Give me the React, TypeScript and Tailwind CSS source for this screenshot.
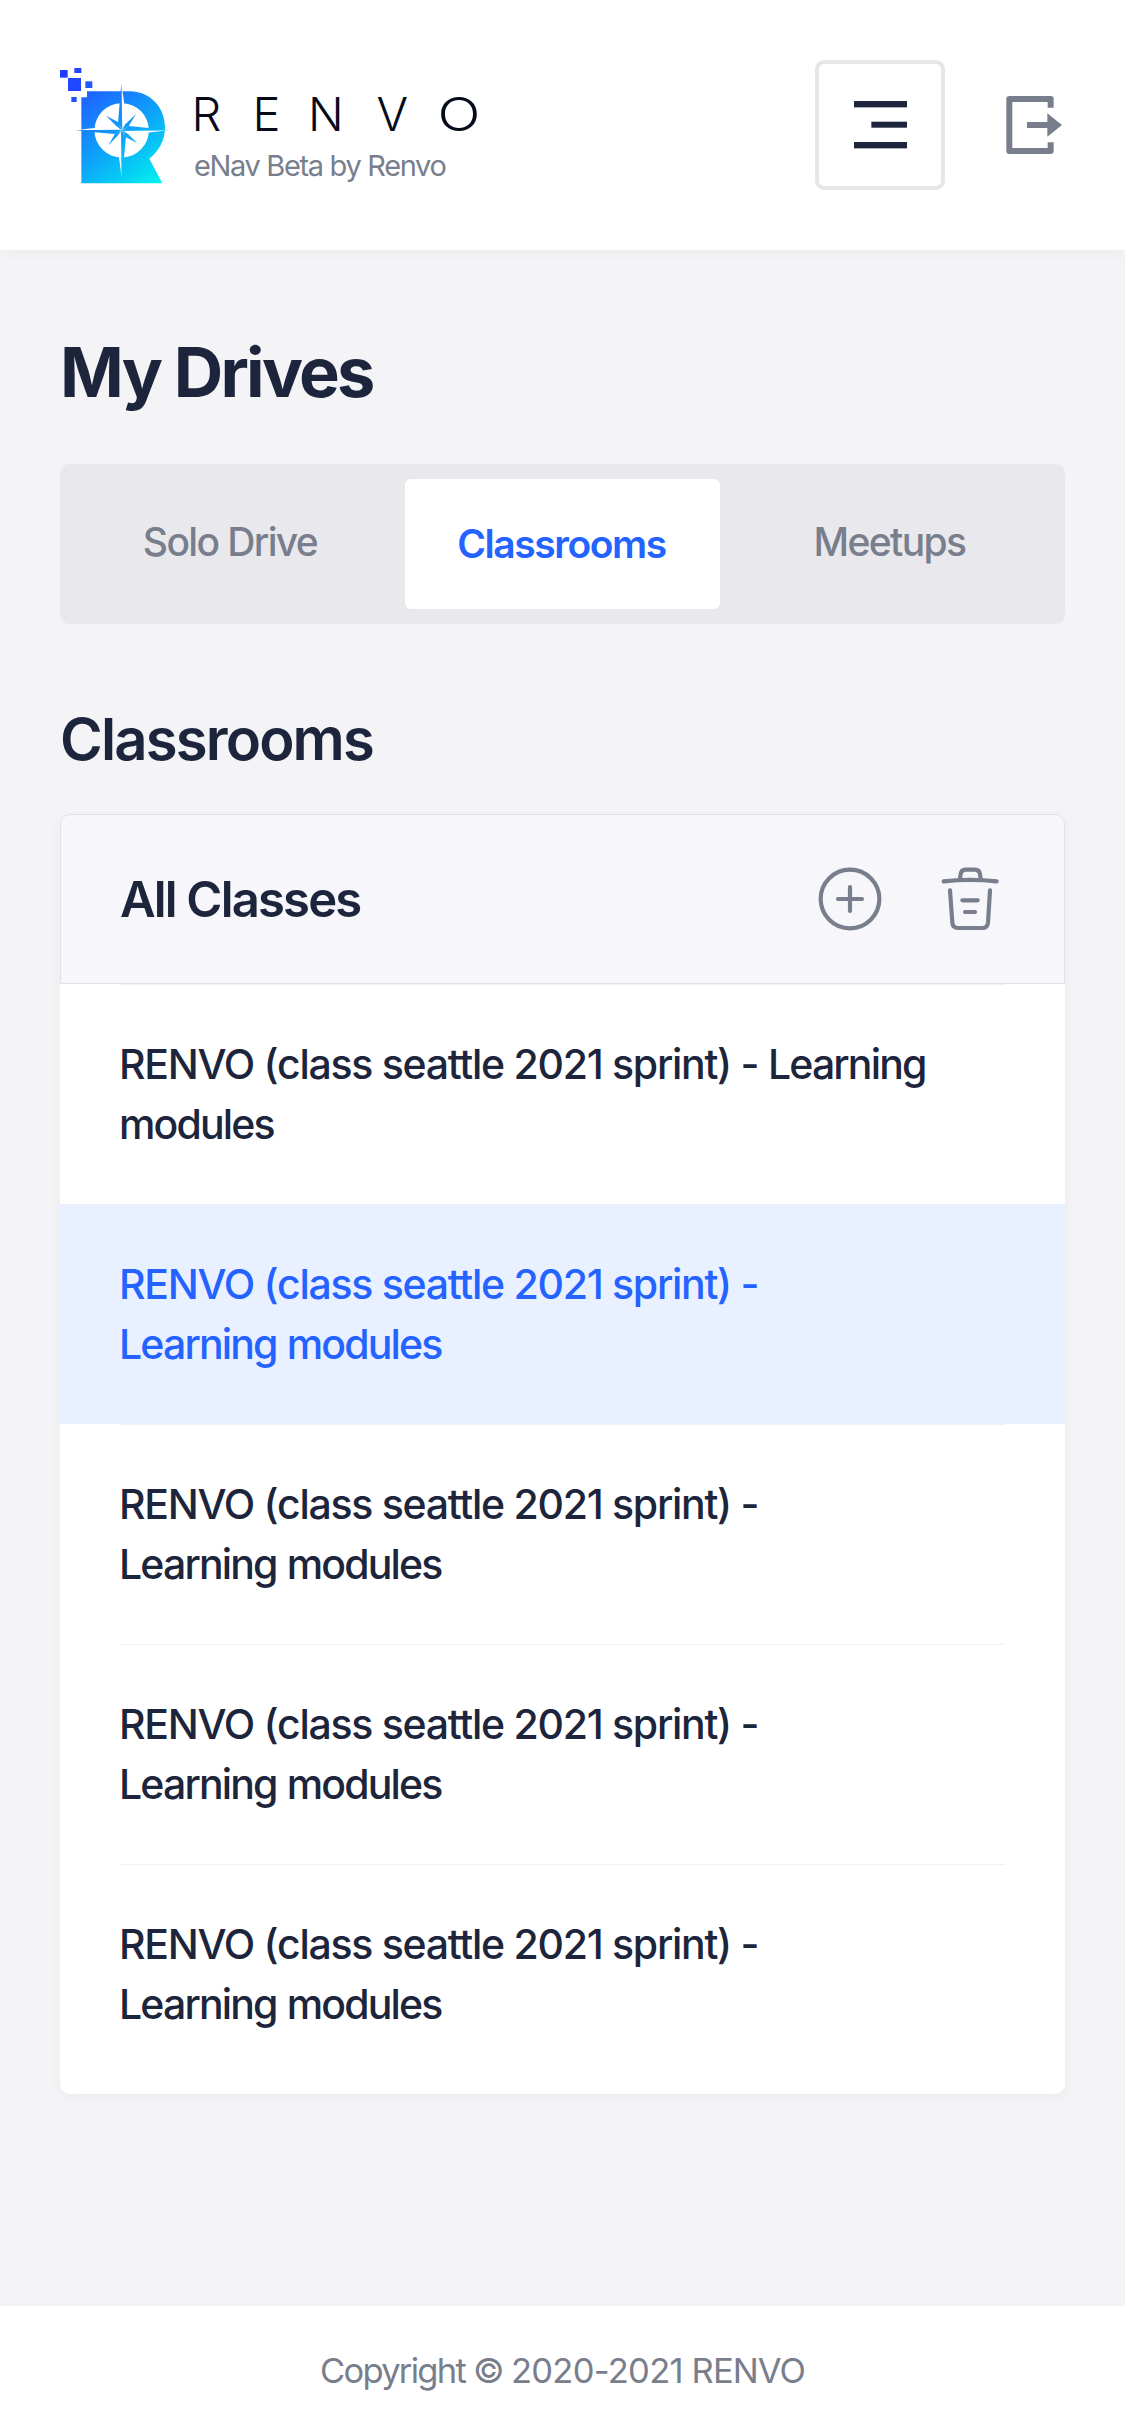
import React from "react";

function LogoMark() {
  return (
    <svg className="h-[117px] w-[110px] shrink-0" viewBox="30 24 330 351" aria-hidden="true">
      <defs>
        <linearGradient id="mark" gradientUnits="userSpaceOnUse" x1="110" y1="90" x2="330" y2="370">
          <stop offset="0" stopColor="#1f60ff" />
          <stop offset="0.5" stopColor="#0da4fa" />
          <stop offset="1" stopColor="#00f2ee" />
        </linearGradient>
      </defs>
      <g fill="#1f47ff">
        <rect x="30" y="30" width="23" height="23" fill="#1f3dff" />
        <rect x="73" y="24" width="21" height="15" fill="#1f45ff" />
        <rect x="54" y="54" width="39" height="39" />
        <rect x="106" y="64" width="21" height="20" fill="#1f5aff" />
        <rect x="64" y="111" width="16" height="15" fill="#1f52ff" />
      </g>
      <path
        d="M111 94H238C300 94 345 142 345 202C345 242 326 274 298 296L337 370H94V112H111Z"
        fill="url(#mark)"
      />
      <circle cx="215" cy="211" r="81.5" fill="#fff" />
      <g fill="#fff">
        <path d="M214 68L224 140L215 211Z" />
        <path d="M357 211L290 218L215 211Z" />
        <path d="M215 352L206 285L215 211Z" />
        <path d="M75 211L140 203L215 211Z" />
      </g>
      <g fill="url(#mark)">
        <path d="M214 68L217 211L204 188L209 130Z" />
        <path d="M357 211L215 213L236 198L297 204Z" />
        <path d="M215 352L213 211L228 230L222 292Z" />
        <path d="M75 211L215 209L195 222L136 217Z" />
        <path d="M168 167L205 187L215 211L198 197Z" />
        <path d="M258 162L236 199L215 211L226 193Z" />
        <path d="M262 250L228 232L215 211L234 222Z" />
        <path d="M175 256L195 221L215 211L203 227Z" />
      </g>
    </svg>
  );
}

function Wordmark() {
  return (
    <svg
      className="mt-[13px] h-[66px] w-[300px] overflow-visible"
      viewBox="0 -8 300 66"
      fontFamily="Inter, sans-serif"
      fontWeight="300"
      fontSize="47"
      fill="#060b1c"
    >
      <text x="1.5 62.5 118 186.5" y="41.5">RENV</text>
      <text x="247.5" y="41.5" textLength="43" lengthAdjust="spacingAndGlyphs">O</text>
    </svg>
  );
}

function MenuIcon() {
  return (
    <svg className="h-[47.4px] w-[53px]" viewBox="161 154 159 142" fill="#1c253c">
      <rect x="161" y="154" width="159" height="19" />
      <rect x="213" y="216" width="107" height="18" />
      <rect x="161" y="277" width="159" height="19" />
    </svg>
  );
}

function ExitIcon() {
  return (
    <svg className="size-[60px]" viewBox="615 135 180 180">
      <path
        d="M752 173V147H628V303H752V277"
        fill="none"
        stroke="#787e8c"
        strokeWidth="18"
        strokeLinejoin="round"
      />
      <path d="M681 216H742V190L786 225L742 260V234H681Z" fill="#787e8c" />
    </svg>
  );
}

function PlusIcon() {
  return (
    <svg className="size-16" viewBox="114 231 192 192" fill="none" stroke="#787e8c" strokeWidth="12.5" strokeLinecap="round">
      <circle cx="210" cy="327" r="88" />
      <path d="M174 327H246M210 291V363" />
    </svg>
  );
}

function TrashIcon() {
  return (
    <svg
      className="size-16"
      viewBox="474 231 192 192"
      fill="none"
      stroke="#787e8c"
      strokeWidth="12.5"
      strokeLinecap="round"
      strokeLinejoin="round"
    >
      <path d="M491 274Q570 265 650 274" />
      <path d="M540 266L542 252Q544 239 556 239H585Q598 239 600 252L602 266" />
      <path d="M510 301L517 398Q518 414 534 414H607Q622 414 624 398L630 301" />
      <path d="M547 331H593M555 366H585" />
    </svg>
  );
}

const classes = [
  { course: "RENVO (class seattle 2021 sprint) -", wide: true, active: false },
  { course: "RENVO (class seattle 2021 sprint) -", wide: false, active: true },
  { course: "RENVO (class seattle 2021 sprint) -", wide: false, active: false },
  { course: "RENVO (class seattle 2021 sprint) -", wide: false, active: false },
  { course: "RENVO (class seattle 2021 sprint) -", wide: false, active: false },
];

export default function App() {
  return (
    <div className="flex h-[2436px] w-[1125px] flex-col bg-[#f4f4f7] font-['Inter',sans-serif] text-[#1c253c]">
      <header className="flex h-[250px] shrink-0 items-start justify-between bg-white px-[60px] shadow-[0_3px_15px_rgba(0,0,0,0.04)]">
        <div className="flex items-start gap-5 pt-[68px]">
          <LogoMark />
          <div className="flex flex-col">
            <Wordmark />
            <span className="mt-px pl-[4px] text-[29px] leading-9 tracking-[-1.34px] whitespace-nowrap text-[#787e8c]">
              eNav Beta by Renvo
            </span>
          </div>
        </div>
        <div className="flex items-center gap-[60px] pt-[60px]">
          <button className="flex size-[130px] items-center justify-center rounded-[9px] border-4 border-[#e6e6e6]">
            <MenuIcon />
          </button>
          <button>
            <ExitIcon />
          </button>
        </div>
      </header>

      <main className="flex grow flex-col px-[60px] pt-[83px]">
        <h1 className="text-[68.5px] leading-[80px] font-bold tracking-[-2.75px]">My Drives</h1>

        <nav className="mt-[51px] grid h-40 grid-cols-3 gap-[15px] rounded-[9px] bg-[#e8e8ed] p-[15px] text-[39px] font-medium text-[#787e8c]">
          <button className="pr-[5px] pb-1 tracking-[-1.64px]">Solo Drive</button>
          <button className="rounded-md bg-white pr-[2px] font-semibold tracking-[-1.44px] text-[#2463ff]">Classrooms</button>
          <button className="pr-[6px] pb-1 tracking-[-1.63px]">Meetups</button>
        </nav>

        <h2 className="mt-20 text-[58px] leading-[70px] font-semibold tracking-[-1.84px]">Classrooms</h2>

        <section className="mt-10 rounded-[10px] bg-white pb-2.5 shadow-[0_3px_15px_rgba(0,0,0,0.04)]">
          <div className="flex h-[170px] items-center justify-between rounded-t-[10px] border border-[#e0e0ea] bg-[#f6f6fb] pr-[62px] pl-[59px]">
            <h3 className="pt-[2px] text-[49px] leading-[60px] font-semibold tracking-[-1.82px]">All Classes</h3>
            <div className="flex gap-14 text-[#787e8c]">
              <button><PlusIcon /></button>
              <button><TrashIcon /></button>
            </div>
          </div>
          <ul className="text-[41px] leading-[60px] font-medium">
            {classes.map((item, i) => (
              <li key={i} className={item.active ? "h-[220px] bg-[#e9f0ff] px-[60px] text-[#2463ff]" : "h-[220px] px-[60px]"}>
                <div className={item.active ? "pt-[50px]" : "border-t border-[#f2f2f5] pt-[49px]"}>
                  <p className="-ml-px tracking-[-1.85px] whitespace-nowrap">
                    <span className="tracking-[-1.28px]">{item.course} </span>
                    {item.wide ? "Learning" : ""}
                    <br />
                    <span className="[word-spacing:1px]">{item.wide ? "modules" : "Learning modules"}</span>
                  </p>
                </div>
              </li>
            ))}
          </ul>
        </section>
      </main>

      <footer className="flex h-[130px] shrink-0 items-center justify-center bg-white text-[34.5px] text-[#787e8c]">
        <p className="tracking-[-0.9px]">
          <span className="tracking-[-1.7px]">Copyright © </span>
          <span className="tracking-[-0.7px]">2020-2021</span> RENVO
        </p>
      </footer>
    </div>
  );
}
